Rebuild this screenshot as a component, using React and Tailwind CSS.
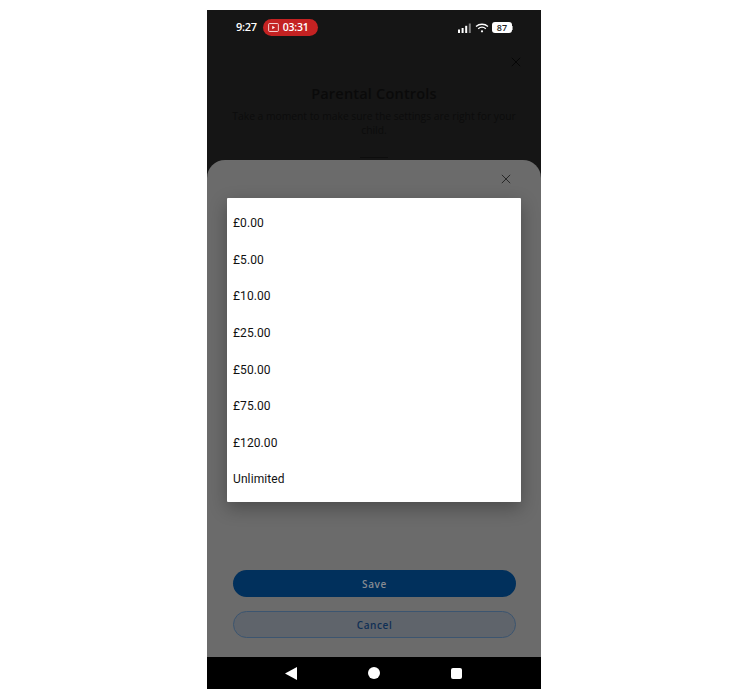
const amounts = ["£0.00", "£5.00", "£10.00", "£25.00", "£50.00", "£75.00", "£120.00", "Unlimited"];

function CloseIcon({ className }) {
  return (
    <svg viewBox="0 0 12 12" className={className} fill="none" stroke="currentColor" strokeWidth="1.1">
      <path d="M1 1l10 10M11 1L1 11" />
    </svg>
  );
}

function StatusBar() {
  return (
    <div className="flex items-center justify-between h-[34px] pl-[29px] pr-[28px] pt-[1px] font-['Open_Sans',sans-serif] text-white">
      <div className="flex items-center gap-[6px]">
        <span className="text-[11px] font-semibold tracking-tight">9:27</span>
        <div className="flex items-center gap-[4px] h-[17px] w-[55px] pl-[5px] rounded-full bg-[#c42222]">
          <svg viewBox="0 0 12 10" className="w-[11px] h-[9px]" fill="none">
            <rect x="0.6" y="0.6" width="10.8" height="8.8" rx="1" stroke="white" strokeWidth="0.9" />
            <path d="M4.6 3l3 2-3 2z" fill="white" />
          </svg>
          <span className="text-[10.5px] font-semibold tracking-tight">03:31</span>
        </div>
      </div>
      <div className="flex items-center gap-[3px]">
        <svg viewBox="0 0 14 10" className="w-[14px] h-[10px]" fill="white">
          <rect x="0" y="6.5" width="2" height="3.5" />
          <rect x="3.6" y="5" width="2" height="5" />
          <rect x="7.2" y="2.8" width="2" height="7.2" />
          <rect x="10.8" y="0.5" width="2" height="9.5" opacity="0.45" />
        </svg>
        <svg viewBox="0 0 14 10" className="w-[14px] h-[10px]" fill="none" stroke="white" strokeWidth="1.3">
          <path d="M1 3.5c3.4-3 8.6-3 12 0M3.2 5.7c2.2-1.9 5.4-1.9 7.6 0" />
          <circle cx="7" cy="8.3" r="1.1" fill="white" stroke="none" />
        </svg>
        <div className="flex items-center">
          <div className="flex items-center justify-center w-[20px] h-[11px] rounded-[3px] bg-white text-[9px] font-semibold leading-none text-[#222]">87</div>
          <div className="w-[1px] h-[4px] bg-[#999]" />
        </div>
      </div>
    </div>
  );
}

export default function App() {
  return (
    <div className="w-[748px] h-[700px] bg-white flex justify-center pt-[10px] font-['Open_Sans',sans-serif]">
      <div className="relative w-[334px] h-[679px] bg-[#151515] flex flex-col overflow-hidden">
        <StatusBar />

        {/* dimmed page behind the sheet */}
        <div className="relative h-[116px] text-[#0a0a0a] text-center">
          <div className="flex justify-end pr-[20px] pt-[13px]">
            <CloseIcon className="w-[10px] h-[10px] text-[#050505]" />
          </div>
          <h1 className="mt-[17px] text-[14.5px] font-semibold leading-5 tracking-[0.2px]">Parental Controls</h1>
          <p className="mt-[6px] px-[20px] text-[10.3px] leading-[13.5px] text-[#0c0c0c]">
            Take a moment to make sure the settings are right for your child.
          </p>
          <div className="mt-[20px] mx-auto w-[28px] h-[1px] bg-[#0d0d0d]" />
        </div>

        {/* bottom sheet */}
        <div className="relative flex-1 flex flex-col rounded-t-[18px] bg-[#6b6b6b] px-[20px]">
          <div className="flex justify-end pt-[14px] pr-[10px]">
            <CloseIcon className="w-[10px] h-[10px] text-[#222]" />
          </div>

          <div className="mt-[14px] h-[304px] bg-white rounded-[1px] pt-[7px] shadow-[0_6px_18px_rgba(0,0,0,0.3)] font-['Roboto',sans-serif] text-[12px] font-[450] tracking-[0.1px] text-[#111]">
            {amounts.map((a) => (
              <div key={a} className="flex items-center h-[36.6px] px-[6px]">{a}</div>
            ))}
          </div>

          <div className="mt-[68px] -mx-[14px] flex flex-col gap-[14px] pl-[20px] pr-[19px] text-[10px] font-semibold tracking-[0.6px]">
            <button className="h-[27px] pt-[2px] rounded-full bg-[#01305c] text-[#868b92]">Save</button>
            <button className="h-[27px] pt-[2px] rounded-full bg-[#5f646b] border border-[#3c5570] text-[#0f2f55]">Cancel</button>
          </div>
        </div>

        {/* android nav */}
        <div className="h-[32px] bg-black flex items-center justify-center gap-[71px] pr-[2px]">
          <svg viewBox="0 0 12 13" className="w-[12px] h-[13px]" fill="white">
            <path d="M12 0v13L0 6.5z" />
          </svg>
          <div className="w-[12px] h-[12px] rounded-full bg-white" />
          <div className="w-[11px] h-[11px] rounded-[2px] bg-white" />
        </div>
      </div>
    </div>
  );
}
